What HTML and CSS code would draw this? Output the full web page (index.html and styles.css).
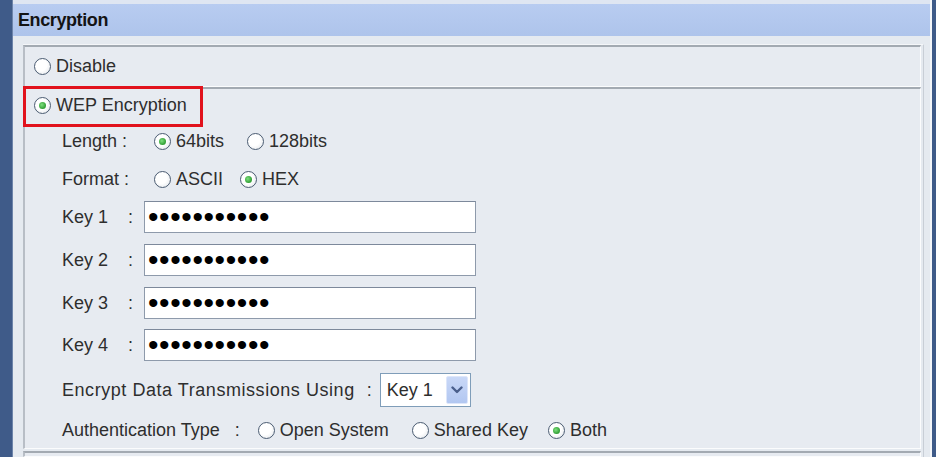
FILE: index.html
```html
<!DOCTYPE html>
<html>
<head>
<meta charset="utf-8">
<link rel="stylesheet" href="styles.css">
</head>
<body>
<div class="page">
  <div class="sidebar"></div>
  <div class="main">
    <div class="topstrip"></div>
    <div class="header">Encryption</div>
    <div class="panel">
      <div class="cell cell-disable">
        <label class="opt"><span class="radio"></span>Disable</label>
      </div>
      <div class="cell cell-wep">
        <div class="highlight"><label class="opt"><span class="radio on"></span>WEP Encryption</label></div>
        <div class="row row-length">
          <span class="lbl lbl-radio">Length&nbsp;:</span>
          <label class="opt opt-a"><span class="radio on"></span>64bits</label>
          <label class="opt"><span class="radio"></span>128bits</label>
        </div>
        <div class="row row-format">
          <span class="lbl lbl-radio">Format&nbsp;:</span>
          <label class="opt opt-b"><span class="radio"></span>ASCII</label>
          <label class="opt"><span class="radio on"></span>HEX</label>
        </div>
        <div class="row row-key1">
          <span class="lbl lbl-key">Key 1</span><span class="colon">:</span>
          <div class="keybox"><span class="dots">•••••••••••</span></div>
        </div>
        <div class="row row-key">
          <span class="lbl lbl-key">Key 2</span><span class="colon">:</span>
          <div class="keybox"><span class="dots">•••••••••••</span></div>
        </div>
        <div class="row row-key">
          <span class="lbl lbl-key">Key 3</span><span class="colon">:</span>
          <div class="keybox"><span class="dots">•••••••••••</span></div>
        </div>
        <div class="row row-key4">
          <span class="lbl lbl-key">Key 4</span><span class="colon">:</span>
          <div class="keybox"><span class="dots">•••••••••••</span></div>
        </div>
        <div class="row row-encrypt">
          <span class="lbl lbl-wide">Encrypt Data Transmissions Using</span><span class="colon2">:</span>
          <div class="select"><span class="select-text">Key 1</span>
            <span class="select-btn"><svg width="12" height="8" viewBox="0 0 12 8"><path d="M1.5 1.5 L6 6 L10.5 1.5" fill="none" stroke="#4a5f8c" stroke-width="2.4" stroke-linecap="round" stroke-linejoin="round"/></svg></span>
          </div>
        </div>
        <div class="row row-auth">
          <span class="lbl">Authentication Type</span><span class="colon3">:</span>
          <label class="opt opt-c"><span class="radio"></span>Open System</label>
          <label class="opt opt-d"><span class="radio"></span>Shared Key</label>
          <label class="opt"><span class="radio on"></span>Both</label>
        </div>
      </div>
      <div class="cell cell-next"></div>
    </div>
  </div>
  <div class="rightbar"></div>
</div>
</body>
</html>
```

FILE: styles.css
```css
* { box-sizing: border-box; }
html, body {
  margin: 0;
  padding: 0;
  width: 936px;
  height: 457px;
  overflow: hidden;
}
body {
  font-family: "Liberation Sans", Arial, sans-serif;
  font-size: 18px;
  color: #2e2e2e;
  background: #e4e9ef;
}
.page {
  display: flex;
  height: 457px;
}
.sidebar {
  width: 13px;
  background: #3f5b89;
  border-right: 1px solid #6d84aa;
}
.rightbar {
  width: 4px;
  background: #3f5b89;
}
.main {
  flex: 1;
  display: flex;
  flex-direction: column;
  background: #e5eaf0;
  border-right: 2px solid #f3f6fa;
}
.topstrip {
  height: 4px;
  background: #dfe6f2;
}
.header {
  height: 32px;
  background: linear-gradient(#b8ccf1, #aec4eb);
  padding-left: 5px;
  display: flex;
  align-items: center;
  font-weight: bold;
  font-size: 18px;
  letter-spacing: -0.4px;
  color: #141414;
}
.panel {
  margin: 8px 6px 0 10px;
  display: flex;
  flex-direction: column;
  flex: 1;
  border-right: 1px solid #c8ced6;
  border-top: 1px solid #f4f6f9;
  padding-right: 2px;
}
.cell {
  border-top: 2px solid #a3aab2;
  border-left: 2px solid #b8bec6;
  border-right: 1px solid #fbfcfd;
  border-bottom: 1px solid #fbfcfd;
  background: #e7ebf1;
}
.cell-disable {
  height: 42px;
  display: flex;
  align-items: center;
  padding-left: 9px;
}
.cell-wep {
  padding-left: 0;
  padding-bottom: 2px;
}
.cell-next {
  flex: 1;
  margin-top: 2px;
}
.opt {
  display: inline-flex;
  align-items: center;
  white-space: nowrap;
}
.radio {
  position: relative;
  width: 17px;
  height: 17px;
  border-radius: 50%;
  border: 1px solid #4b5c72;
  background: radial-gradient(circle at 40% 40%, #ffffff 0 45%, #dde1e6 100%);
  margin-right: 5px;
  flex: none;
}
.radio.on::after {
  content: "";
  position: absolute;
  left: 4px;
  top: 4px;
  width: 7px;
  height: 7px;
  border-radius: 50%;
  background: radial-gradient(circle at 40% 40%, #7ee07e 0, #2f9d33 70%);
}
.highlight {
  display: inline-flex;
  align-items: center;
  width: 180px;
  height: 41px;
  border: 3px solid #e1121c;
  margin: -3px 0 0 -2px;
  padding: 0 0 3px 8px;
}
.row {
  display: flex;
  align-items: center;
  padding-left: 37px;
  white-space: nowrap;
}
.row-length { height: 30px; margin-top: -1px; }
.row-format { height: 30px; margin-top: 8px; }
.row-key1 { height: 32px; margin-top: 7px; }
.row-key { height: 32px; margin-top: 11px; }
.row-key4 { height: 32px; margin-top: 10px; }
.row-encrypt { height: 34px; margin-top: 12px; }
.row-auth { height: 32px; margin-top: 7px; }
.lbl-radio { width: 92px; }
.opt-a { width: 93px; }
.opt-b { width: 86px; }
.lbl-key { width: 66px; }
.colon { width: 16px; }
.lbl-wide { letter-spacing: 0.55px; }
.colon2 { margin: 0 8px 0 12px; }
.colon3 { margin: 0 18px 0 15px; }
.opt-c { margin-right: 23px; }
.opt-d { margin-right: 20px; }
.keybox {
  width: 332px;
  height: 32px;
  background: #fff;
  border: 1px solid #8e9aab;
  border-top-color: #7d899b;
  display: flex;
  align-items: center;
  padding-left: 3px;
}
.dots {
  font-size: 30px;
  letter-spacing: 0.6px;
  color: #000;
  line-height: 1;
}
.select {
  width: 91px;
  height: 34px;
  background: #fff;
  border: 1px solid #7f9db9;
  display: flex;
  align-items: center;
  padding-left: 6px;
}
.select-text { flex: 1; }
.select-btn {
  width: 22px;
  height: 28px;
  margin-right: 2px;
  background: linear-gradient(#c9d8f7, #b2c7f1);
  border: 1px solid #dde6fa;
  border-radius: 2px;
  display: flex;
  align-items: center;
  justify-content: center;
}
```
